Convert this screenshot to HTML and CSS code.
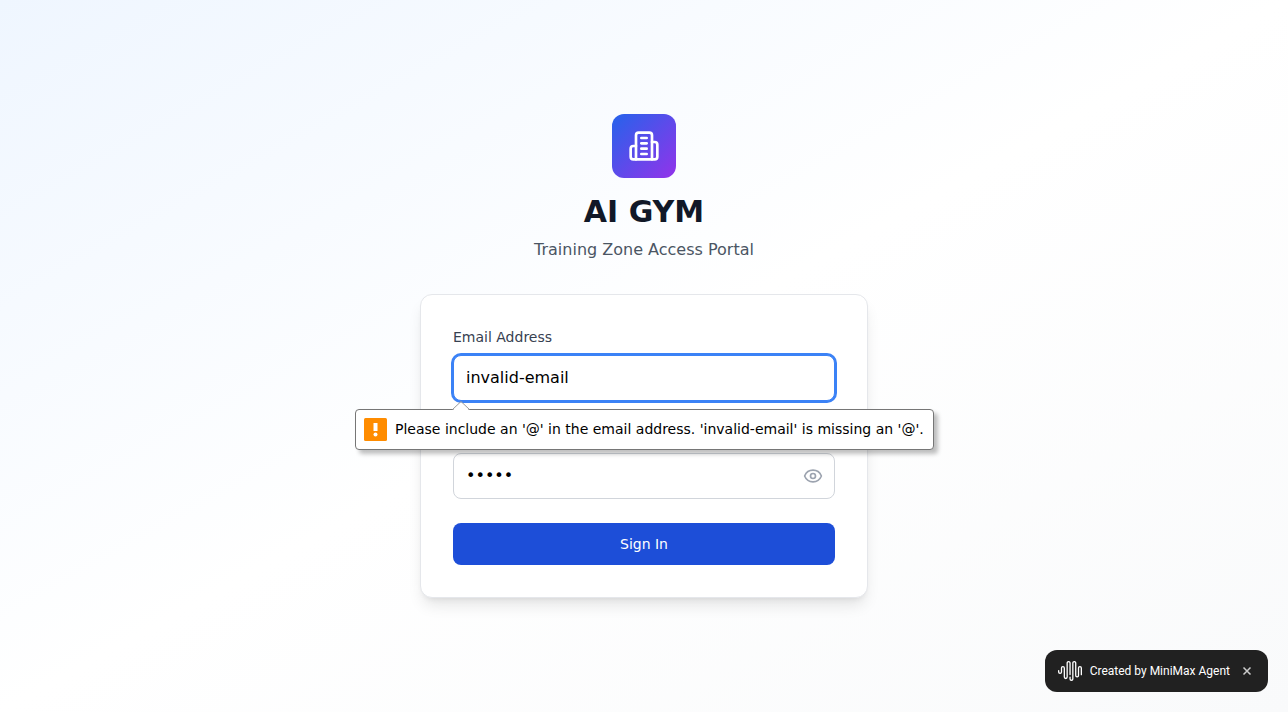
FILE: index.html
```html
<!DOCTYPE html>
<html lang="en">
<head>
<meta charset="utf-8">
<meta name="viewport" content="width=device-width, initial-scale=1">
<title>AI GYM</title>
<link rel="stylesheet" href="styles.css">
</head>
<body>
<main class="page">
  <div class="portal">
    <header class="brand">
      <div class="brand-mark">
        <svg class="brand-icon" viewBox="0 0 24 24" aria-hidden="true">
          <path d="M6 22V4a2 2 0 0 1 2-2h8a2 2 0 0 1 2 2v18Z"/>
          <path d="M6 12H4a2 2 0 0 0-2 2v6a2 2 0 0 0 2 2h2"/>
          <path d="M18 9h2a2 2 0 0 1 2 2v9a2 2 0 0 1-2 2h-2"/>
          <path d="M10 6h4"/><path d="M10 10h4"/><path d="M10 14h4"/><path d="M10 18h4"/>
        </svg>
      </div>
      <h1 class="brand-title">AI GYM</h1>
      <p class="brand-subtitle">Training Zone Access Portal</p>
    </header>
    <form class="card" novalidate>
      <div class="field">
        <label class="label" for="email">Email Address</label>
        <div class="control">
          <input class="input input-active" id="email" type="email" value="invalid-email" aria-describedby="email-error">
          <div class="bubble" id="email-error" role="alert">
            <svg class="bubble-arrow" viewBox="0 0 18 9" aria-hidden="true">
              <path class="bubble-arrow-fill" d="M1 9 9 1l8 8Z"/>
              <path class="bubble-arrow-line" d="M.5 8.5 9 .5l8.500 8"/>
            </svg>
            <svg class="bubble-icon" viewBox="0 0 23 23" aria-hidden="true">
              <rect width="23" height="23" rx="1.500" fill="#ff8c00"/>
              <path d="M9.500 5h4v8h-4z" fill="#fff"/>
              <circle cx="11.500" cy="16.500" r="2" fill="#fff"/>
            </svg>
            <span>Please include an '@' in the email address. 'invalid-email' is missing an '@'.</span>
          </div>
        </div>
      </div>
      <div class="field">
        <label class="label label-covered" for="password">Password</label>
        <div class="control">
          <input class="input input-password" id="password" type="password" value="12345">
          <button class="reveal" type="button" aria-label="Show password">
            <svg class="reveal-icon" viewBox="0 0 24 24" aria-hidden="true">
              <path d="M2.062 12.348a1 1 0 0 1 0-.696 10.750 10.750 0 0 1 19.876 0 1 1 0 0 1 0 .696 10.750 10.750 0 0 1-19.876 0"/>
              <circle cx="12" cy="12" r="3"/>
            </svg>
          </button>
        </div>
      </div>
      <button class="submit" type="submit">Sign In</button>
    </form>
  </div>
</main>
<aside class="badge">
  <svg class="badge-logo" viewBox="0 0 24 24" aria-hidden="true">
    <path d="M16.278 2c1.156 0 2.093.927 2.093 2.070v12.501a.74.74 0 00.744.709.74.74 0 00.743-.709V9.099a2.060 2.060 0 012.071-2.049A2.060 2.060 0 0124 9.100v6.561a.649.649 0 01-.652.645.649.649 0 01-.653-.645V9.100a.762.762 0 00-.766-.758.762.762 0 00-.766.758v7.472a2.037 2.037 0 01-2.048 2.026 2.037 2.037 0 01-2.048-2.026v-12.500a.785.785 0 00-.788-.753.785.785 0 00-.789.752l-.001 15.904A2.037 2.037 0 0113.441 22a2.037 2.037 0 01-2.048-2.026V18.040c0-.356.292-.645.652-.645.36 0 .652.289.652.645v1.934c0 .263.142.506.372.638.23.131.514.131.744 0a.734.734 0 00.372-.638V4.070c0-1.143.937-2.070 2.093-2.070zm-5.674 0c1.156 0 2.093.927 2.093 2.070v11.523a.648.648 0 01-.652.645.648.648 0 01-.652-.645V4.070a.785.785 0 00-.789-.78.785.785 0 00-.789.78v14.013a2.060 2.060 0 01-2.070 2.048 2.060 2.060 0 01-2.071-2.048V9.100a.762.762 0 00-.766-.758.762.762 0 00-.766.758v3.800a2.060 2.060 0 01-2.071 2.049A2.060 2.060 0 010 12.900v-1.378c0-.357.292-.646.652-.646.36 0 .653.29.653.646V12.900c0 .418.343.757.766.757s.766-.339.766-.757V9.099a2.060 2.060 0 012.070-2.048 2.060 2.060 0 012.071 2.048v8.984c0 .419.343.758.767.758.423 0 .766-.339.766-.758V4.070c0-1.143.937-2.070 2.093-2.070z"/>
  </svg>
  <span>Created by MiniMax Agent</span>
  <button class="badge-close" type="button" aria-label="Close">
    <svg class="badge-close-icon" viewBox="0 0 10 10" aria-hidden="true"><path d="m1.500 1.500 7 7M8.500 1.500l-7 7"/></svg>
  </button>
</aside>
</body>
</html>
```
FILE: styles.css
```css
*,
*::before,
*::after {
  box-sizing: border-box;
}

body {
  margin: 0;
  font-family: "DejaVu Sans", sans-serif;
  font-size: 16px;
  line-height: 24px;
  color: #000;
}

h1,
p {
  margin: 0;
}

button,
input {
  font: inherit;
}

.page {
  display: flex;
  align-items: center;
  justify-content: center;
  min-height: 100vh;
  padding: 16px;
  background: linear-gradient(to bottom right, #eff6ff, #fff, #f9fafb);
}

.portal {
  width: 100%;
  max-width: 448px;
}

.brand {
  display: flex;
  flex-direction: column;
  align-items: center;
  margin-bottom: 32px;
  text-align: center;
}

.brand-mark {
  display: grid;
  place-items: center;
  width: 64px;
  height: 64px;
  margin-bottom: 16px;
  border-radius: 12px;
  background: linear-gradient(to bottom right, #2563eb, #9333ea);
}

.brand-icon {
  width: 32px;
  height: 32px;
  fill: none;
  stroke: #fff;
  stroke-width: 2;
  stroke-linecap: round;
  stroke-linejoin: round;
}

.brand-title {
  margin-bottom: 8px;
  font-size: 30px;
  line-height: 36px;
  font-weight: 700;
  color: #111827;
}

.brand-subtitle {
  color: #4b5563;
}

.card {
  display: flex;
  flex-direction: column;
  gap: 24px;
  padding: 32px;
  border: 1px solid #e5e7eb;
  border-radius: 12px;
  background: #fff;
  box-shadow: 0 10px 15px -3px rgb(0 0 0 / 10%), 0 4px 6px -4px rgb(0 0 0 / 10%);
}

.field {
  display: flex;
  flex-direction: column;
  gap: 8px;
}

.label {
  font-size: 14px;
  line-height: 20px;
  font-weight: 500;
  color: #374151;
}

/* Keeps its row while the validation bubble lies over it */
.label-covered {
  visibility: hidden;
}

.control {
  position: relative;
  display: flex;
}

.input {
  width: 100%;
  height: 46px;
  padding: 10px 12px 12px;
  border: 1px solid #d1d5db;
  border-radius: 8px;
  outline: none;
  background: #fff;
  color: #000;
}

.input-active,
.input:focus {
  border-color: #3b82f6;
  box-shadow: 0 0 0 2px #3b82f6;
}

.input-password {
  padding-right: 48px;
}

.reveal {
  position: absolute;
  inset: 0 0 0 auto;
  display: flex;
  align-items: center;
  padding: 0 12px;
  border: 0;
  background: none;
  color: #9ca3af;
  cursor: pointer;
}

.reveal-icon {
  width: 20px;
  height: 20px;
  fill: none;
  stroke: currentColor;
  stroke-width: 2;
  stroke-linecap: round;
  stroke-linejoin: round;
}

.submit {
  padding: 11px 16px;
  border: 0;
  border-radius: 8px;
  background: #1d4ed8;
  color: #fff;
  font-size: 14px;
  line-height: 20px;
  font-weight: 500;
  cursor: pointer;
}

/* Validation bubble, anchored under the email input */
.bubble {
  position: absolute;
  z-index: 1;
  top: 54px;
  left: -98px;
  display: flex;
  align-items: flex-start;
  gap: 8px;
  padding: 8px 9px 8px 8px;
  border: 1px solid #767676;
  border-radius: 4px;
  background: #fff;
  box-shadow: 4px 4px 4px rgb(0 0 0 / 25%);
  font-size: 14px;
  line-height: 22px;
  white-space: nowrap;
}

.bubble-arrow {
  position: absolute;
  top: -9px;
  left: 96px;
  width: 18px;
  height: 9px;
}

.bubble-arrow-fill {
  fill: #fff;
}

.bubble-arrow-line {
  fill: none;
  stroke: #999;
}

.bubble-icon {
  flex: none;
  width: 23px;
  height: 23px;
}

.badge {
  position: fixed;
  right: 20px;
  bottom: 20px;
  display: flex;
  align-items: center;
  gap: 8px;
  height: 42px;
  padding: 0 13px;
  border-radius: 12px;
  background: #212121;
  color: #fff;
  font-family: Roboto, sans-serif;
  font-size: 12px;
  line-height: 18px;
  font-weight: 400;
}

.badge-logo {
  width: 24px;
  height: 24px;
  fill: #fff;
}

.badge-close {
  display: grid;
  place-items: center;
  width: 16px;
  height: 16px;
  margin-left: 1px;
  padding: 0;
  border: 0;
  background: none;
  color: #ccc;
  cursor: pointer;
}

.badge-close-icon {
  width: 10px;
  height: 10px;
  fill: none;
  stroke: currentColor;
  stroke-width: 1.5;
}
```
